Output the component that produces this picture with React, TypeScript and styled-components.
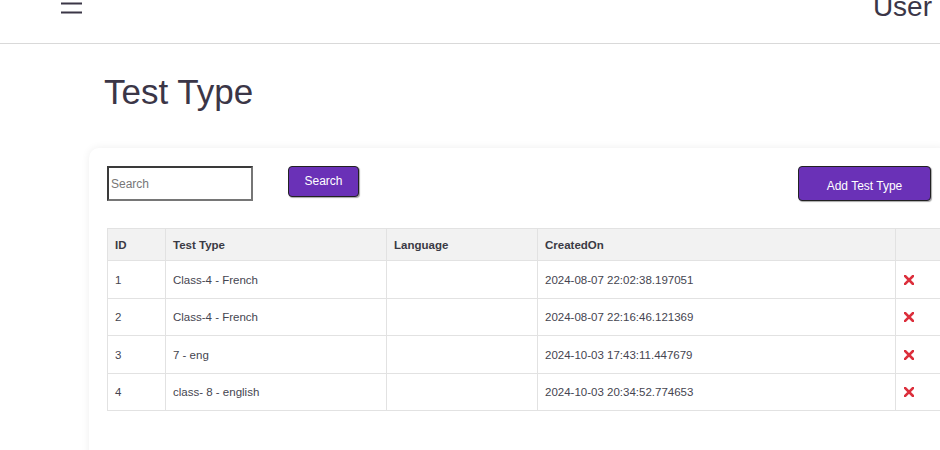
import React from "react";
import styled, { createGlobalStyle } from "styled-components";

const Global = createGlobalStyle`
  html, body { margin: 0; padding: 0; background: #fff; overflow: hidden; }
  body { font-family: "Liberation Sans", Arial, sans-serif; color: #3b3647; }
  *, *::before, *::after { box-sizing: border-box; }
`;

const Page = styled.div`
  width: 940px;
  height: 450px;
  overflow: hidden;
`;

const TopBar = styled.header`
  height: 44px;
  border-bottom: 1px solid #d9d9d9;
  display: flex;
  justify-content: space-between;
  align-items: flex-start;
  padding: 0 8px 0 58px;
  overflow: hidden;
`;

const MenuIcon = styled.svg`
  margin-top: -10px;
  display: block;
`;

const UserLabel = styled.span`
  font-size: 28px;
  line-height: 32px;
  margin-top: -9px;
  color: #3b3647;
`;

const Main = styled.main`
  padding-left: 89px;
`;

const Title = styled.h1`
  margin: 28px 0 36px 15px;
  font-size: 35px;
  line-height: 40px;
  font-weight: 400;
  color: #3b3647;
`;

const Card = styled.section`
  width: 860px;
  background: #fff;
  border-radius: 10px;
  box-shadow: 0 0 8px rgba(0, 0, 0, 0.07);
  padding: 18px;
  min-height: 340px;
`;

const Toolbar = styled.div`
  display: flex;
  align-items: flex-start;
`;

const SearchInput = styled.input`
  width: 146px;
  height: 35px;
  border: 2px solid #3a3a3a;
  border-right-color: #767676;
  border-bottom-color: #767676;
  padding: 0 2px;
  font-family: "Liberation Sans", Arial, sans-serif;
  font-size: 12px;
  outline: none;
  &::placeholder { color: #777; }
`;

const PurpleButton = styled.button<{ $w: number; $h: number }>`
  width: ${p => p.$w}px;
  height: ${p => p.$h}px;
  background: #6a31b7;
  color: #fff;
  border: 1px solid #222;
  border-radius: 4px;
  box-shadow: 1px 1px 1px rgba(0, 0, 0, 0.35);
  font-family: "Liberation Sans", Arial, sans-serif;
  font-size: 12px;
  padding: 0;
  cursor: pointer;
`;

const SearchBtn = styled(PurpleButton)`
  margin-left: 35px;
  padding-bottom: 1px;
`;

const AddBtn = styled(PurpleButton)`
  margin-left: auto;
  padding-top: 4px;
`;

const Table = styled.table`
  margin-top: 27px;
  border-collapse: collapse;
  table-layout: fixed;
  width: 848px;
  font-size: 11.5px;
`;

const Th = styled.th<{ $w: number }>`
  width: ${p => p.$w}px;
  height: 32px;
  background: #f2f2f2;
  border: 1px solid #e2e2e2;
  text-align: left;
  padding: 0 7px;
  font-weight: 700;
  color: #3a3a44;
`;

const Td = styled.td`
  height: 37.5px;
  border: 1px solid #e2e2e2;
  padding: 0 7px;
  padding-top: 1px;
  color: #454550;
`;

const DeleteCell = styled(Td)`
  padding-left: 8px;
`;

const XIcon = () => (
  <svg width="10" height="10" viewBox="0 0 10 10" style={{ display: "block" }}>
    <path d="M1 1 L9 9 M9 1 L1 9" stroke="#dc2f3c" strokeWidth="2.6" strokeLinecap="square" />
  </svg>
);

const rows = [
  { id: 1, type: "Class-4 - French", lang: "", created: "2024-08-07 22:02:38.197051" },
  { id: 2, type: "Class-4 - French", lang: "", created: "2024-08-07 22:16:46.121369" },
  { id: 3, type: "7 - eng", lang: "", created: "2024-10-03 17:43:11.447679" },
  { id: 4, type: "class- 8 - english", lang: "", created: "2024-10-03 20:34:52.774653" },
];

export default function App() {
  return (
    <Page>
      <Global />
      <TopBar>
        <MenuIcon width="24" height="28" viewBox="0 0 24 28">
          <path d="M3 4.5 H24 M3 13.5 H24 M3 22.5 H24" stroke="#3b3647" strokeWidth="2.2" />
        </MenuIcon>
        <UserLabel>User</UserLabel>
      </TopBar>
      <Main>
        <Title>Test Type</Title>
        <Card>
          <Toolbar>
            <SearchInput placeholder="Search" />
            <SearchBtn $w={71} $h={31}>Search</SearchBtn>
            <AddBtn $w={133} $h={35}>Add Test Type</AddBtn>
          </Toolbar>
          <Table>
            <thead>
              <tr>
                <Th $w={58}>ID</Th>
                <Th $w={221}>Test Type</Th>
                <Th $w={151}>Language</Th>
                <Th $w={358}>CreatedOn</Th>
                <Th $w={60}></Th>
              </tr>
            </thead>
            <tbody>
              {rows.map(r => (
                <tr key={r.id}>
                  <Td>{r.id}</Td>
                  <Td>{r.type}</Td>
                  <Td>{r.lang}</Td>
                  <Td>{r.created}</Td>
                  <DeleteCell><XIcon /></DeleteCell>
                </tr>
              ))}
            </tbody>
          </Table>
        </Card>
      </Main>
    </Page>
  );
}
